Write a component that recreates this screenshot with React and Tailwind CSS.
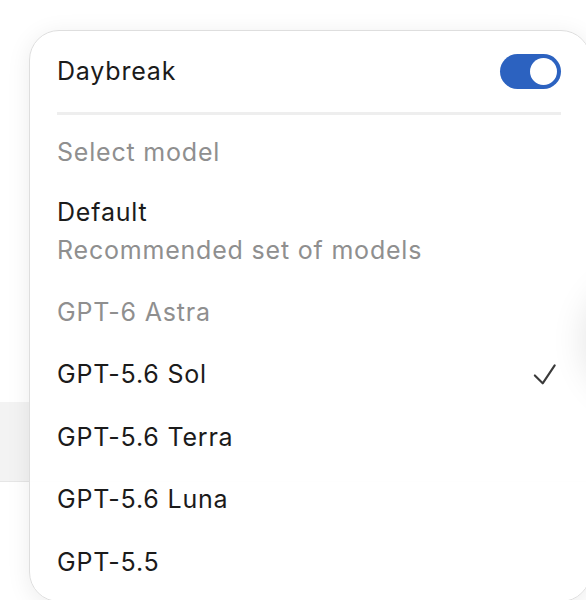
const models = [
  { name: 'GPT-5.6 Sol', h: 'h-[63px]', selected: true },
  { name: 'GPT-5.6 Terra', h: 'h-[62px]' },
  { name: 'GPT-5.6 Luna', h: 'h-[63px]' },
  { name: 'GPT-5.5', h: 'h-[62px]' },
];

function Check() {
  return (
    <svg width="24" height="24" viewBox="0 0 26 26" fill="none">
      <path
        d="M2 13.5l8.5 8.5L23.5 2.5"
        stroke="#3a3a3a"
        strokeWidth="2.3"
        strokeLinecap="round"
        strokeLinejoin="round"
      />
    </svg>
  );
}

export default function App() {
  return (
    <div
      className="relative w-[586px] h-[600px] overflow-hidden bg-white"
      style={{ fontFamily: 'Inter, "Noto Sans", sans-serif' }}
    >
      {/* page behind the menu */}
      <div className="pt-[402px]">
        <div className="h-[80px] bg-[#f3f3f3] border-b border-[#e6e6e6]" />
      </div>

      {/* model menu */}
      <div className="absolute left-[29px] top-[30px] w-[562px] h-[572px] rounded-[30px] border border-[#dedede] bg-white/95 shadow-[0_4px_24px_rgba(0,0,0,0.08)] pl-[27px] pr-[29px] text-[25px] tracking-[0.8px] text-[#1b1b1b]">
        <div className="flex items-center justify-between pt-[22px]">
          <span>Daybreak</span>
          <div className="flex items-center justify-end w-[61px] h-[35px] rounded-full bg-[#2c62c0] pr-[4px]">
            <div className="w-[27px] h-[27px] rounded-full bg-white" />
          </div>
        </div>
        <div className="mt-[21px] h-[3px] bg-[#eeeeee]" />

        <div className="mt-[7px] h-[62px] flex items-center text-[#8f8f8f]">Select model</div>
        <div className="h-[98px] pt-[9px] leading-[38px]">
          <div>Default</div>
          <div className="text-[#8f8f8f]">Recommended set of models</div>
        </div>
        <div className="h-[62px] flex items-center text-[#8f8f8f]">GPT-6 Astra</div>
        {models.map((m) => (
          <div key={m.name} className={`${m.h} flex items-center justify-between`}>
            <span>{m.name}</span>
            {m.selected && (
              <span className="mr-[4px] flex">
                <Check />
              </span>
            )}
          </div>
        ))}
      </div>

      {/* edge of a control lying over the menu */}
      <div className="absolute left-[586px] top-[280px] w-[120px] h-[120px] rounded-full bg-white shadow-[0_0_36px_rgba(0,0,0,0.12)]" />
    </div>
  );
}
